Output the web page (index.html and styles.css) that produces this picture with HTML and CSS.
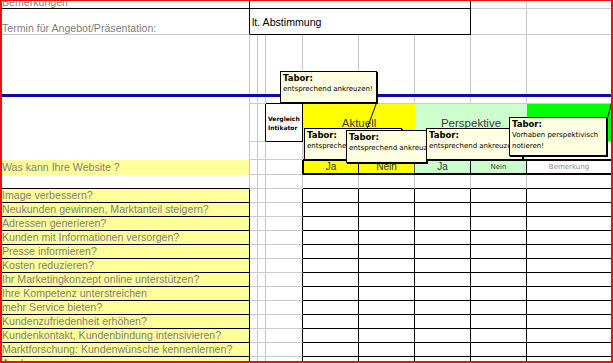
FILE: index.html
```html
<!DOCTYPE html>
<html lang="de">
<head>
<meta charset="utf-8">
<title>Website-Ziele</title>
<link rel="stylesheet" href="styles.css">
</head>
<body>
<div class="sheet">
  <div class="grid">
    <!-- row 1 -->
    <div class="c rb bb top">Bemerkungen</div>
    <div class="c s6 rb bb"></div>
    <div class="c"></div>
    <div class="c rn"></div>
    <!-- row 2 -->
    <div class="c rb top">Termin für Angebot/Präsentation:</div>
    <div class="c s6 rb bb val">lt. Abstimmung</div>
    <div class="c"></div>
    <div class="c rn"></div>
    <!-- row 3 -->
    <div class="c bn"></div><div class="c bn"></div><div class="c bn"></div><div class="c bn"></div><div class="c bn"></div><div class="c bn"></div><div class="c bn"></div><div class="c bn"></div><div class="c bn rn"></div>
    <div class="blue"></div>
    <!-- row 4 -->
    <div class="c bn tall"></div>
    <div class="c"></div><div class="c"></div><div class="c bb"></div><div class="c"></div><div class="c"></div><div class="c"></div><div class="c"></div><div class="c rn"></div>
    <!-- row 5 -->
    <div class="c"></div>
    <div class="c rb"></div>
    <div class="c rb bb box"><span>Vergleich</span><span>Intikator</span></div>
    <div class="s2 yel head">Aktuell</div>
    <div class="s2 lgr head">Perspektive</div>
    <div class="c rn grn"></div>
    <!-- row 6 -->
    <div class="c"></div><div class="c"></div><div class="c"></div>
    <div class="s2 yel cb"></div>
    <div class="s2 lgr cb"></div>
    <div class="cb white"></div>
    <!-- row 7 -->
    <div class="c was">Was kann Ihre Website ?</div>
    <div class="c"></div><div class="c"></div><div class="c rb"></div>
    <div class="jarow">
      <div class="j yel">Ja</div>
      <div class="j yel mid">Nein</div>
      <div class="j lgr">Ja</div>
      <div class="j lgr light small dark">Nein</div>
      <div class="j last small">Bemerkung</div>
    </div>
    <!-- row 8 -->
    <div class="c bb"></div><div class="c"></div><div class="c"></div><div class="c"></div>
    <div class="c bb"></div><div class="c bb"></div><div class="c bb"></div><div class="c bb"></div><div class="c bb rn"></div>

    <div class="c rb bb q">Image verbessern?</div><div class="c"></div><div class="c"></div><div class="c rb"></div><div class="c rb bb"></div><div class="c rb bb"></div><div class="c rb bb"></div><div class="c rb bb"></div><div class="c bb rn"></div>
    <div class="c rb bb q">Neukunden gewinnen, Marktanteil steigern?</div><div class="c"></div><div class="c"></div><div class="c rb"></div><div class="c rb bb"></div><div class="c rb bb"></div><div class="c rb bb"></div><div class="c rb bb"></div><div class="c bb rn"></div>
    <div class="c rb bb q">Adressen generieren?</div><div class="c"></div><div class="c"></div><div class="c rb"></div><div class="c rb bb"></div><div class="c rb bb"></div><div class="c rb bb"></div><div class="c rb bb"></div><div class="c bb rn"></div>
    <div class="c rb bb q">Kunden mit Informationen versorgen?</div><div class="c"></div><div class="c"></div><div class="c rb"></div><div class="c rb bb"></div><div class="c rb bb"></div><div class="c rb bb"></div><div class="c rb bb"></div><div class="c bb rn"></div>
    <div class="c rb bb q">Presse informieren?</div><div class="c"></div><div class="c"></div><div class="c rb"></div><div class="c rb bb"></div><div class="c rb bb"></div><div class="c rb bb"></div><div class="c rb bb"></div><div class="c bb rn"></div>
    <div class="c rb bb q">Kosten reduzieren?</div><div class="c"></div><div class="c"></div><div class="c rb"></div><div class="c rb bb"></div><div class="c rb bb"></div><div class="c rb bb"></div><div class="c rb bb"></div><div class="c bb rn"></div>
    <div class="c rb bb q">Ihr Marketingkonzept online unterstützen?</div><div class="c"></div><div class="c"></div><div class="c rb"></div><div class="c rb bb"></div><div class="c rb bb"></div><div class="c rb bb"></div><div class="c rb bb"></div><div class="c bb rn"></div>
    <div class="c rb bb q">Ihre Kompetenz unterstreichen</div><div class="c"></div><div class="c"></div><div class="c rb"></div><div class="c rb bb"></div><div class="c rb bb"></div><div class="c rb bb"></div><div class="c rb bb"></div><div class="c bb rn"></div>
    <div class="c rb bb q">mehr Service bieten?</div><div class="c"></div><div class="c"></div><div class="c rb"></div><div class="c rb bb"></div><div class="c rb bb"></div><div class="c rb bb"></div><div class="c rb bb"></div><div class="c bb rn"></div>
    <div class="c rb bb q">Kundenzufriedenheit erhöhen?</div><div class="c"></div><div class="c"></div><div class="c rb"></div><div class="c rb bb"></div><div class="c rb bb"></div><div class="c rb bb"></div><div class="c rb bb"></div><div class="c bb rn"></div>
    <div class="c rb bb q">Kundenkontakt, Kundenbindung intensivieren?</div><div class="c"></div><div class="c"></div><div class="c rb"></div><div class="c rb bb"></div><div class="c rb bb"></div><div class="c rb bb"></div><div class="c rb bb"></div><div class="c bb rn"></div>
    <div class="c rb bb q">Marktforschung: Kundenwünsche kennenlernen?</div><div class="c"></div><div class="c"></div><div class="c rb"></div><div class="c rb bb"></div><div class="c rb bb"></div><div class="c rb bb"></div><div class="c rb bb"></div><div class="c bb rn"></div>
    <div class="c rb bn q">Analyse</div><div class="c bn"></div><div class="c bn"></div><div class="c rb bn"></div><div class="c rb bn"></div><div class="c rb bn"></div><div class="c rb bn"></div><div class="c rb bn"></div><div class="c bn rn"></div>
  </div>

  <svg class="arrows" width="609" height="360" viewBox="0 0 609 360" aria-hidden="true">
    <line x1="374.5" y1="102" x2="364.5" y2="129" stroke="#000" stroke-width="1"/>
    <line x1="605" y1="119" x2="609.5" y2="102" stroke="#000" stroke-width="1"/>
  </svg>

  <div class="note n1"><b>Tabor:</b>entsprechend ankreuzen!</div>
  <div class="note n2"><b>Tabor:</b>entsprechend ankreuzen!</div>
  <div class="note n3"><b>Tabor:</b>entsprechend ankreuzen!</div>
  <div class="note n4"><b>Tabor:</b>entsprechend ankreuzen!</div>
  <div class="note n5"><b>Tabor:</b>Vorhaben perspektivisch<br>notieren!</div>
</div>
</body>
</html>
```

FILE: styles.css
```css
body {
  margin: 0;
  background: #fff;
}

.sheet {
  position: relative;
  width: 613px;
  height: 363px;
  box-sizing: border-box;
  border: 2px solid #ec1111;
  border-top-width: 1px;
  overflow: hidden;
  font-family: "Liberation Sans", Arial, sans-serif;
  font-size: 10.6px;
  color: #808080;
  background: #fff;
}

.grid {
  display: grid;
  grid-template-columns: 248px 8px 8px 37px 56px 56px 56px 56px 84px;
  grid-template-rows: 8px 26px 59px 3px 7px 38px 18px 15px 14px repeat(12, 14px) 4px;
}

.grid > div {
  box-sizing: border-box;
  min-width: 0;
  min-height: 0;
  overflow: hidden;
}

.c {
  border-right: 1px solid #cacaca;
  border-bottom: 1px solid #cacaca;
}

.rb { border-right-color: #000; }
.bb { border-bottom-color: #000; }
.rn { border-right: 0; }
.bn { border-bottom: 0; }

.s2 { grid-column: span 2; }
.s6 { grid-column: span 6; }
.tall { grid-row: span 3; }

.blue {
  grid-column: 1 / -1;
  background: #0b0ba6;
}

.top {
  display: flex;
  align-items: flex-end;
  line-height: 12px;
  white-space: nowrap;
}

.val {
  display: flex;
  align-items: center;
  padding-left: 2px;
  color: #000;
  white-space: nowrap;
}

.box {
  display: flex;
  flex-direction: column;
  justify-content: center;
  padding-left: 2px;
  background: #fff;
  font: bold 6px/9px "DejaVu Sans", sans-serif;
  color: #000;
  white-space: nowrap;
}

.yel { background: #ffff00; }
.lgr { background: #ccffcc; }
.grn { background: #00ff00; }
.white { background: #fff; }

.cb { border-bottom: 1px solid #000; }

.head {
  display: flex;
  align-items: center;
  justify-content: center;
  font-size: 11.5px;
  color: #3a3a3a;
}

.was {
  background: #ffff99;
  border-bottom: 0;
  line-height: 15px;
  white-space: nowrap;
}

.q {
  background: #ffff99;
  line-height: 13px;
  white-space: nowrap;
}

.jarow {
  grid-column: span 5;
  display: grid;
  grid-template-columns: 55px 56px 56px 56px 1fr;
  border-left: 1px solid #000;
  border-top: 1px solid #000;
  border-bottom: 2px solid #000;
}

.j {
  display: flex;
  align-items: center;
  justify-content: center;
  border-right: 1px solid #000;
  font-size: 10px;
  line-height: 12px;
  color: #333;
  overflow: hidden;
}

.j.mid { border-right-color: #555; }
.j.light { border-right-color: #000; }
.j.last {
  border-right: 0;
  background: #fff;
  color: #8c8c8c;
}

.small {
  font-family: "DejaVu Sans", sans-serif;
  font-size: 7px;
}

.dark { color: #333; }

.arrows {
  position: absolute;
  left: 0;
  top: 0;
}

.note {
  position: absolute;
  box-sizing: border-box;
  background: #ffffe1;
  border: 1px solid #000;
  box-shadow: 1px 1px 0 #000;
  padding: 1px 2px;
  font: 7px/11px "DejaVu Sans", sans-serif;
  color: #000;
  white-space: nowrap;
  overflow: hidden;
}

.note b {
  display: block;
  font-size: 8.5px;
  font-weight: bold;
}

.n1 { left: 278px; top: 70px; width: 97px; height: 32px; }
.n2 { left: 302px; top: 127px; width: 98px; height: 32px; }
.n3 { left: 344px; top: 129px; width: 81px; height: 33px; }
.n4 { left: 424px; top: 127px; width: 97px; height: 32px; }
.n5 { left: 507px; top: 116px; width: 98px; height: 39px; }
```
